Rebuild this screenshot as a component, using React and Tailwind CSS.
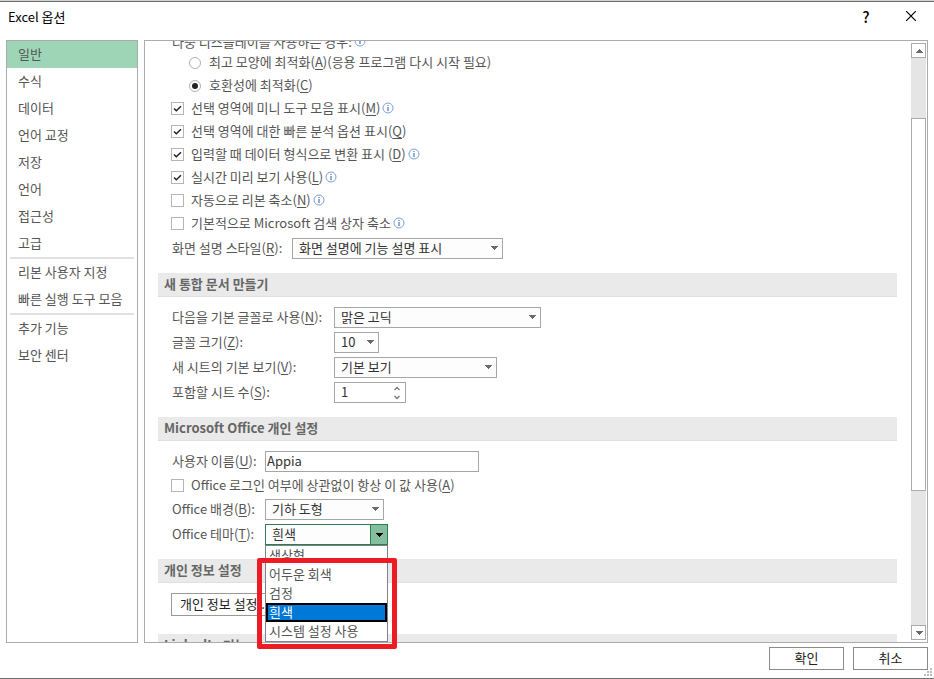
import React from "react";
import clsx from "clsx";

const navGroups = [
  ["일반", "수식", "데이터", "언어 교정", "저장", "언어", "접근성", "고급"],
  ["리본 사용자 지정", "빠른 실행 도구 모음"],
  ["추가 기능", "보안 센터"],
];

const uiOptions = [
  { text: "선택 영역에 미니 도구 모음 표시", hotkey: "M", checked: true, info: true },
  { text: "선택 영역에 대한 빠른 분석 옵션 표시", hotkey: "Q", checked: true },
  { text: "입력할 때 데이터 형식으로 변환 표시 ", hotkey: "D", checked: true, info: true },
  { text: "실시간 미리 보기 사용", hotkey: "L", checked: true, info: true },
  { text: "자동으로 리본 축소", hotkey: "N", info: true },
  { text: "기본적으로 Microsoft 검색 상자 축소", info: true },
];

const themes = ["색상형", "어두운 회색", "검정", "흰색", "시스템 설정 사용"];

function Caption({ text, hotkey, colon, after }) {
  return (
    <span className="block pb-0.5 whitespace-pre">
      {text}
      {hotkey && (
        <>
          (<u className="underline-offset-2">{hotkey}</u>)
        </>
      )}
      {colon && ":"}
      {after}
    </span>
  );
}

function InfoIcon() {
  return (
    <svg width="12" height="12" viewBox="0 0 12 12" fill="none" className="mb-px ml-0.5 shrink-0">
      <circle cx="6" cy="6" r="5" stroke="#7ba0d4" />
      <path d="M6 5v4M6 3v1" stroke="#4a76b8" strokeWidth="1.2" />
    </svg>
  );
}

function Triangle({ up, className }) {
  return (
    <svg
      width="8"
      height="4"
      viewBox="0 0 8 4"
      shapeRendering="crispEdges"
      className={clsx("pointer-events-none fill-current", className)}
    >
      <path d={up ? "M0 4L4 0L8 4Z" : "M0 0H8L4 4Z"} />
    </svg>
  );
}

function CheckRow({ text, hotkey, checked, info }) {
  return (
    <div className="flex h-[23px] items-center pl-[13px]">
      <label className="flex items-center gap-[7px]">
        <span className="relative flex">
          <input
            type="checkbox"
            defaultChecked={checked}
            className="peer size-[13px] appearance-none border border-[#b5b5b5] bg-white"
          />
          <svg
            viewBox="0 0 13 13"
            fill="none"
            className="pointer-events-none absolute inset-0 hidden size-[13px] peer-checked:block"
          >
            <path d="M3 6.5L5.3 8.8L10 4.2" stroke="#222" strokeWidth="1.5" />
          </svg>
        </span>
        <Caption text={text} hotkey={hotkey} />
      </label>
      {info && <InfoIcon />}
    </div>
  );
}

function RadioRow({ text, hotkey, after, checked }) {
  return (
    <label className="flex h-[23px] items-center gap-2 pl-[31px]">
      <span className="relative flex">
        <input
          type="radio"
          name="display"
          defaultChecked={checked}
          className="peer size-3 appearance-none rounded-full border border-[#b0b0b0] bg-white"
        />
        <span className="pointer-events-none absolute inset-[3px] hidden rounded-full bg-[#222] peer-checked:block" />
      </span>
      <Caption text={text} hotkey={hotkey} after={after} />
    </label>
  );
}

function Select({ id, value, className }) {
  return (
    <span className={clsx("relative flex", className)}>
      <select
        id={id}
        className="h-[21px] w-full appearance-none border border-[#a6a6a6] bg-[#fdfdfd] pb-0.5 pl-1.5 leading-[17px] text-[#333]"
      >
        <option>{value}</option>
      </select>
      <Triangle className="absolute top-2 right-[5px] text-[#6a6a6a]" />
    </span>
  );
}

function Field({ id, text, hotkey, labelClass, children }) {
  return (
    <div className="flex h-[25px] items-center pl-3.5">
      <label htmlFor={id} className={clsx("shrink-0", labelClass)}>
        <Caption text={text} hotkey={hotkey} colon />
      </label>
      {children}
    </div>
  );
}

function SectionTitle({ children }) {
  return (
    <h2 className="flex h-6 items-center border-b border-[#e0e0e4] bg-[#eaeaea] pb-[3px] pl-1.5 font-bold text-[#666]">
      {children}
    </h2>
  );
}

function ThemePicker() {
  return (
    <div className="w-[123px]">
      <span className="relative flex">
        <select
          id="theme"
          defaultValue="흰색"
          className="h-[21px] w-full appearance-none border border-[#2f7d4f] bg-[#fdfdfd] pb-0.5 pl-1.5 leading-[17px] text-[#333]"
        >
          {themes.map((theme) => (
            <option key={theme}>{theme}</option>
          ))}
        </select>
        <span className="pointer-events-none absolute inset-y-0 right-0 flex w-[18px] items-center justify-center border border-[#2f7d4f] bg-[#86bfa0]">
          <Triangle className="text-black" />
        </span>
      </span>
      <ul
        role="listbox"
        aria-label="Office 테마"
        className="absolute z-10 w-[123px] border border-[#80808c] bg-white"
      >
        {themes.map((theme) => (
          <li
            key={theme}
            role="option"
            aria-selected={theme === "흰색"}
            className={clsx(
              "flex h-[19px] items-center border-2 pb-0.5 pl-px",
              theme === "흰색" ? "border-black bg-[#0078d7] text-white" : "border-transparent"
            )}
          >
            {theme}
          </li>
        ))}
      </ul>
      {/* highlight around the available themes */}
      <div className="pointer-events-none absolute z-20 mt-[13px] -ml-2 h-[91px] w-[140px] rounded-xs border-5 border-[#ed1c24]" />
    </div>
  );
}

function Scrollbar() {
  return (
    <div className="my-0.5 mr-px flex w-[15px] shrink-0 flex-col bg-[#e5e5e5]">
      <button
        aria-label="위로"
        className="flex h-[15px] items-center justify-center border border-[#ababab] bg-white text-[#6a6a6a]"
      >
        <Triangle up />
      </button>
      <div className="flex-[60]" />
      <div className="flex-[373] border border-[#ababab] bg-white" />
      <div className="flex-[134]" />
      <button
        aria-label="아래로"
        className="flex h-[15px] items-center justify-center border border-[#ababab] bg-white text-[#6a6a6a]"
      >
        <Triangle />
      </button>
    </div>
  );
}

function Sidebar() {
  return (
    <nav className="w-[132px] shrink-0 border border-[#ababab]">
      {navGroups.map((group, index) => (
        <ul key={index} className={clsx(index > 0 && "before:mx-[3px] before:block before:h-0.5 before:bg-[#e1e1e1]")}>
          {group.map((item) => (
            <li key={item}>
              <button
                className={clsx(
                  "flex h-[27px] w-full items-center pb-0.5 pl-[11px] whitespace-nowrap",
                  item === "일반" && "bg-[#9fd5b7]"
                )}
              >
                {item}
              </button>
            </li>
          ))}
        </ul>
      ))}
    </nav>
  );
}

export default function App() {
  return (
    <div className="relative flex h-screen flex-col overflow-hidden border-b border-[#707070] bg-white font-['Noto_Sans_CJK_KR',sans-serif] text-[13px] leading-[19px] text-[#555]">
      <div className="h-0.5 shrink-0 border-b border-[#6b6b6b] bg-[#d2d2d2]" />
      <header className="mb-2 flex h-[30px] shrink-0 items-center pr-[18px] pb-0.5 pl-2 text-black">
        <h1 className="flex-1">Excel 옵션</h1>
        <button aria-label="도움말" className="mr-[35px] w-2.5 text-center text-[15px] font-medium">
          ?
        </button>
        <button aria-label="닫기">
          <svg width="10" height="10" viewBox="0 0 10 10" fill="none">
            <path d="M0 0L10 10M10 0L0 10" stroke="black" strokeWidth="1.2" />
          </svg>
        </button>
      </header>

      <div className="flex min-h-0 flex-1 gap-1.5 px-1.5">
        <Sidebar />
        <main className="flex min-w-0 flex-1 border border-[#ababab]">
          <div className="min-w-0 flex-1 overflow-hidden pr-3.5 pl-[13px]">
            {/* the pane is scrolled, so its first row is cut off */}
            <div className="-mt-2.5 flex h-5 items-center pl-3.5">
              다중 디스플레이를 사용하는 경우:
              <InfoIcon />
            </div>
            <RadioRow text="최고 모양에 최적화" hotkey="A" after="(응용 프로그램 다시 시작 필요)" />
            <RadioRow text="호환성에 최적화" hotkey="C" checked />
            {uiOptions.map((option) => (
              <CheckRow key={option.text} {...option} />
            ))}
            <div className="pt-px pb-3">
              <Field id="tip" text="화면 설명 스타일" hotkey="R" labelClass="w-[120px]">
                <Select id="tip" value="화면 설명에 기능 설명 표시" className="w-[211px]" />
              </Field>
            </div>

            <SectionTitle>새 통합 문서 만들기</SectionTitle>
            <div className="pt-2 pb-3">
              <Field id="font" text="다음을 기본 글꼴로 사용" hotkey="N" labelClass="w-[162px]">
                <Select id="font" value="맑은 고딕" className="w-[207px]" />
              </Field>
              <Field id="size" text="글꼴 크기" hotkey="Z" labelClass="w-[162px]">
                <Select id="size" value="10" className="w-[45px]" />
              </Field>
              <Field id="view" text="새 시트의 기본 보기" hotkey="V" labelClass="w-[162px]">
                <Select id="view" value="기본 보기" className="w-[163px]" />
              </Field>
              <Field id="sheets" text="포함할 시트 수" hotkey="S" labelClass="w-[162px]">
                <span className="flex h-[21px] w-[72px] items-center border border-[#a6a6a6] pr-1">
                  <input
                    id="sheets"
                    inputMode="numeric"
                    defaultValue="1"
                    className="w-0 flex-1 pb-0.5 pl-1.5 text-[#333]"
                  />
                  <svg width="8" height="14" viewBox="0 0 8 14" fill="none" stroke="#777" strokeWidth="1.3">
                    <path d="M1.5 4L4 1.5L6.5 4M1.5 10L4 12.5L6.5 10" />
                  </svg>
                </span>
              </Field>
            </div>

            <SectionTitle>Microsoft Office 개인 설정</SectionTitle>
            <div className="pt-2 pb-3">
              <Field id="user" text="사용자 이름" hotkey="U" labelClass="w-[93px]">
                <input
                  id="user"
                  defaultValue="Appia"
                  className="h-[21px] w-[214px] border border-[#a6a6a6] pb-0.5 pl-px text-[#333]"
                />
              </Field>
              <CheckRow text="Office 로그인 여부에 상관없이 항상 이 값 사용" hotkey="A" />
              <Field id="background" text="Office 배경" hotkey="B" labelClass="w-[93px]">
                <Select id="background" value="기하 도형" className="w-[119px]" />
              </Field>
              <Field id="theme" text="Office 테마" hotkey="T" labelClass="w-[93px]">
                <ThemePicker />
              </Field>
            </div>

            <SectionTitle>개인 정보 설정</SectionTitle>
            <div className="flex pt-2.5 pb-[18px] pl-[13px]">
              <button className="h-[23px] border border-[#999] px-2 pb-0.5 whitespace-nowrap text-[#222]">
                개인 정보 설정...
              </button>
            </div>

            <SectionTitle>LinkedIn 기능</SectionTitle>
          </div>
          <Scrollbar />
        </main>
      </div>

      <footer className="flex shrink-0 justify-end gap-[9px] pt-1 pr-1.5 pb-2 text-[#222]">
        <button className="h-[23px] w-[75px] border border-[#8a8a8a] pb-0.5">확인</button>
        <button className="h-[23px] w-[75px] border border-[#8a8a8a] pb-0.5">취소</button>
      </footer>
      <svg
        width="8"
        height="8"
        viewBox="0 0 8 8"
        fill="#bbb"
        className="absolute right-0.5 bottom-0.5"
      >
        <path d="M6 0h2v2h-2zM3 3h2v2h-2zM6 3h2v2h-2zM0 6h2v2h-2zM3 6h2v2h-2zM6 6h2v2h-2z" />
      </svg>
    </div>
  );
}
